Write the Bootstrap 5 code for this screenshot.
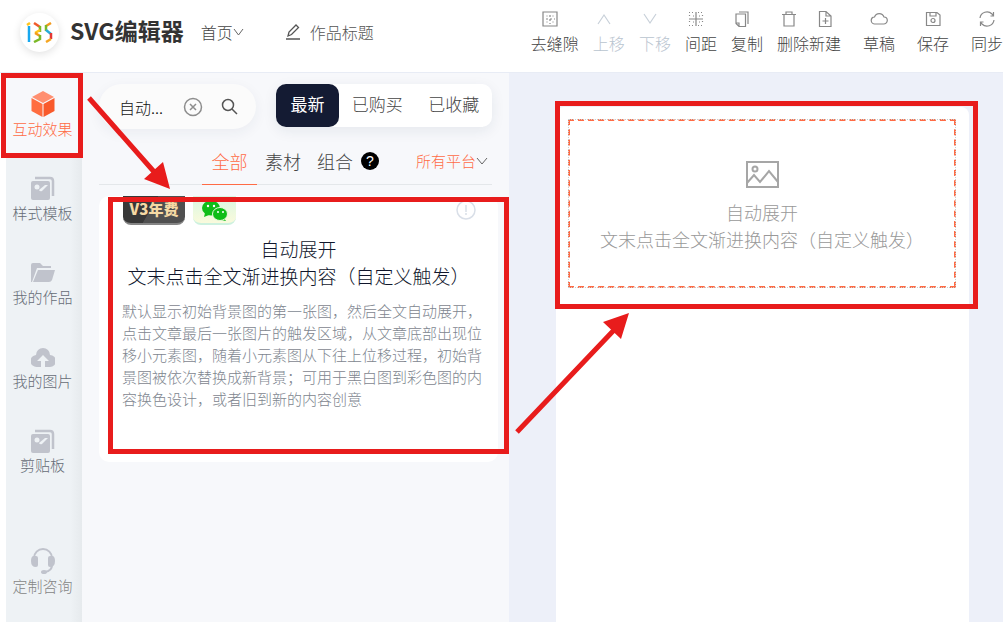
<!DOCTYPE html>
<html lang="zh-CN">
<head>
<meta charset="utf-8">
<meta name="viewport" content="width=device-width, initial-scale=1">
<title>SVG编辑器</title>
<link href="https://cdn.jsdelivr.net/npm/bootstrap@5.3.0/dist/css/bootstrap.min.css" rel="stylesheet">
<style>
:root{--coral:#ff6b45;--mark:#e81c1c;--navy:#141b33;--pane:#f7f8fb;--soft:#c0c3cc}
body{font-family:"Noto Sans CJK SC","Liberation Sans",sans-serif;font-weight:300;color:#444;background:#fff}
svg{display:block}
button{border:0;background:none;padding:0;color:inherit;font-weight:inherit;white-space:nowrap}
.app{min-height:100vh}
.topbar{height:72px;padding-left:20px;font-size:16px;box-shadow:0 1px 0 #e8ecf5;position:relative;z-index:1}
.logo-disc{width:39px;height:39px;margin-right:11px;border-radius:50%;box-shadow:0 2px 8px rgba(0,0,0,.12)}
.brand-name{font-size:23px;line-height:32px;font-weight:700;color:#333;margin-right:17px;padding-bottom:4px;white-space:nowrap}
.home-link{color:#444;margin-right:40px}
.work-name{width:80px;border:0;padding:0;font-weight:inherit;color:#555;background:none}
.work-name::placeholder{color:#555;opacity:1}
.tools{gap:22px;padding-top:10px;line-height:24px;align-self:flex-start}
.tools-main{gap:14px}
.tools svg{height:18px;width:18px;stroke:#888;fill:none;stroke-width:1.2;margin-bottom:3px}
.tools-main svg{margin-right:10px}
.tools .off{color:#b9c4cf}
.tools .off svg{stroke:#c8d0d9}
.side{width:76px;margin-left:6px;background:linear-gradient(90deg,#eef2f5 85%,#e6eaed);font-size:15px;line-height:22px}
.side a{height:84px;padding:18px 3px 0 0;color:#666d77;text-decoration:none}
.side a svg{margin-bottom:0}
.side .active{color:var(--coral);background:var(--pane)}
.side .help{margin-top:37px;color:#858585}
.mark-box{position:absolute;border:5px solid var(--mark);pointer-events:none}
.side .mark-box{inset:1px -1px -2px -5px;z-index:2}
.pane{width:427px;background:var(--pane);padding:12px 11px 0 17px}
.find{width:157px;height:45px;border-radius:23px;background:#fbfbfb;padding:0 17px 0 20px;box-shadow:0 4px 14px rgba(30,50,80,.06)}
.find input{width:48px;border:0;padding:0;font-size:16px;font-weight:300;background:none;color:#111;margin-right:16px}
.modes{height:43px;width:216px;background:#fff;border-radius:10px;font-size:17px;margin-right:6px;box-shadow:0 4px 14px rgba(30,50,80,.08)}
.modes button{flex:1 1 76px;padding-bottom:4px}
.modes .now{flex-basis:63px;flex-grow:0;background:var(--navy);color:#fff;font-weight:400;border-radius:10px}
.kinds{height:40px;margin:16px 6px 0 0;border-bottom:1px solid #e4e7ea;font-size:18px;padding-left:103px}
.kinds button{height:40px;line-height:32px;padding-bottom:8px}
.kinds .now{width:55px;color:var(--coral);border-bottom:1px solid var(--coral)}
.q{width:18px;height:18px;border-radius:50%;background:#000;color:#fff;font:400 14px/18px "Liberation Sans",sans-serif}
.plat{font-size:15px;color:var(--coral)}
.effect{margin-top:11px;background:#fff;border-radius:10px;height:266px;padding:0 22px 0 24px}
.tagline{height:29px;gap:8px}
.v3{width:62px;background:linear-gradient(120deg,#383838 45%,#505050 46%);border-bottom:2px solid #858585;border-radius:0 0 8px 8px;color:#f5d9a4;font-size:15px;line-height:26px;font-weight:900}
.wx{width:43px;background:linear-gradient(#d9f8e3,#fafadc);border-bottom:2px solid #cdf1df;border-radius:0 0 8px 8px}
.effect h2{font-size:19px;line-height:27px;font-weight:300;color:#10162c;margin:10px -10px 11px -12px}
.effect p{font-size:15px;line-height:22px;color:#7e868f;margin:0 -8px 0 -1px}
.effect .mark-box{inset:1px -11px 8px 9px}
.stage{background:#edf0f9;padding:35px 34px 0 47px;min-width:0}
.paper{background:#fff;border-radius:8px 8px 0 0;padding:12px 13px 0 12px}
.slot{height:169px;border:2px dashed var(--coral);outline:1px dotted #ccc;outline-offset:-1px;padding-top:38px;font-size:18px;line-height:27px;color:#999;white-space:nowrap}
.slot svg{margin-bottom:10px}
.paper .mark-box{top:-6px;left:-1px;right:-9px;height:208px}
.arrows{position:absolute;left:0;top:0;pointer-events:none}
</style>
</head>
<body>
<div class="app d-flex flex-column">
<header class="topbar d-flex align-items-center">
  <div class="d-flex align-items-center mb-2">
    <span class="logo-disc d-flex align-items-center justify-content-center"><svg width="27" height="21" viewBox="0 0 27 21" fill="none" stroke-width="2.500"><path stroke="#ffc51e" d="M1 3l3-2"/><path stroke="#18a8ef" d="M3 4v16"/><path stroke="#f15b2a" d="M8 1l6 4"/><path stroke="#7bb928" d="M14 4v6"/><path stroke="#ffc51e" d="M14 8l-5 3"/><path stroke="#f39a1e" d="M9 11l5 3"/><path stroke="#7bb928" d="M14 13v4l-6 3"/><path stroke="#f39a1e" d="M25 1l-5 3"/><path stroke="#7bb928" d="M20 3v6"/><path stroke="#24acd9" d="M20 8l5 4"/><path stroke="#e43834" d="M25 11v6"/><path stroke="#f5a623" d="M25 17l-5 3"/></svg></span>
    <span class="brand-name">SVG编辑器</span>
    <a href="#" class="home-link d-flex align-items-center text-decoration-none text-nowrap">首页<svg width="11" height="10" fill="none" stroke="#666"><path d="M1 2l4.500 6L10 2"/></svg></a>
    <svg class="me-2" width="18" height="16" fill="none" stroke="#555" stroke-width="1.300"><path d="M2 15h14M4 12l1-4 7-7 2.500 2.500-7 7z"/></svg>
    <input class="work-name" aria-label="作品标题" placeholder="作品标题">
  </div>
  <div class="tools d-flex ms-auto">
    <div class="d-flex">
    <div class="tools-main d-flex">
      <button class="d-flex flex-column align-items-center"><svg viewBox="0 0 18 18"><path d="M2 2h14v14H2z"/><path stroke-dasharray="2 2" d="M9 5v9M5 9h9"/><path d="M5.500 6h1M11.500 6h1M5.500 12h1M11.500 12h1"/></svg>去缝隙</button>
      <button class="off d-flex flex-column align-items-center"><svg viewBox="0 0 18 18"><path d="M3 14l6-9 6 9"/></svg>上移</button>
      <button class="off d-flex flex-column align-items-center"><svg viewBox="0 0 18 18"><path d="M3 4l6 9 6-9"/></svg>下移</button>
      <button class="d-flex flex-column align-items-center"><svg viewBox="0 0 18 18"><path d="M9 2v14M2 9h14"/><path stroke-dasharray="1 2" d="M2 2.500h5M11 2.500h5M2 15.500h5M11 15.500h5M2.500 5v2M15.500 5v2M2.500 11v3M15.500 11v3M6 6h1M12 6h1M6 12h1M12 12h1"/></svg>间距</button>
      <button class="d-flex flex-column align-items-center"><svg viewBox="0 0 18 18"><path d="M6 2h9v12M3 4h9.500v12.500H6L3 13.500zM3 13h3v3"/></svg>复制</button>
      <button class="d-flex flex-column align-items-center"><svg class="me-2" viewBox="0 0 18 18"><path d="M2 4.500h14M6 4V2h6v2M4 5v11h10V5"/></svg>删除</button>
    </div>
    <button class="d-flex flex-column align-items-center"><svg viewBox="0 0 18 18"><path d="M3.500 1.500H10L15 6v10.500H3.500zM10 2v4h4.500M9.500 8v6M6.500 11h6"/></svg>新建</button>
    </div>
    <button class="d-flex flex-column align-items-center"><svg viewBox="0 0 18 18"><path d="M5 14a3.500 3.500 0 0 1-.5-7 5 5 0 0 1 9.500 0 3.500 3.500 0 0 1-.5 7z"/></svg>草稿</button>
    <button class="d-flex flex-column align-items-center"><svg viewBox="0 0 18 18"><path d="M2.500 2.500H13L16 5v10.500H2.500zM6 3v3h6V3"/><circle cx="9" cy="10.500" r="2"/></svg>保存</button>
    <button class="d-flex flex-column align-items-center"><svg viewBox="0 0 18 18"><path d="M2 8a7 7 0 0 1 12-4l1.500 2M15.500 2v4h-3M16 10a7 7 0 0 1-12 4l-1.500-2M2.500 16v-4h3"/></svg>同步</button>
  </div>
</header>

<main class="d-flex flex-grow-1 position-relative">
  <nav class="side flex-shrink-0">
    <a href="#" class="active position-relative d-flex flex-column align-items-center"><svg width="24" height="28" viewBox="0 0 24 28"><path fill="#ff8f70" d="M12 1l11 6-11 6L1 7z"/><path fill="#ff6d40" d="M.5 8L11.500 14v13L.5 21z"/><path fill="#f95a2c" d="M23.500 8l-11 6v13l11-6z"/></svg>互动效果<span class="mark-box"></span></a>
    <a href="#" class="d-flex flex-column align-items-center"><svg width="24" height="28" viewBox="0 0 24 28"><path fill="none" stroke="#c0c3cc" stroke-width="2.500" d="M4 4h15q3 0 3 3v15"/><rect y="7" width="19" height="19" rx="2" fill="#c0c3cc"/><path fill="#eef2f5" d="M8 16l6-5h3l-6 6q-2 1-3-1z"/><circle cx="6" cy="13" r="2.500" fill="#eef2f5"/></svg>样式模板</a>
    <a href="#" class="d-flex flex-column align-items-center"><svg width="24" height="28" viewBox="0 0 24 28" fill="#c0c3cc"><path d="M0 24V7q0-2 2-2h7l3 3h8v2H6L1 24z"/><path d="M7 12h17l-3 10q-1 2-3 2H2z"/></svg>我的作品</a>
    <a href="#" class="d-flex flex-column align-items-center"><svg width="24" height="28" viewBox="0 0 24 28"><path fill="#c0c3cc" d="M6 25a6 6 0 0 1-1-12 7 7 0 0 1 14 0 6 6 0 0 1 0 12z"/><path fill="#eef2f5" d="M12 13l6 6h-4v6h-4v-6H6z"/></svg>我的图片</a>
    <a href="#" class="d-flex flex-column align-items-center"><svg width="24" height="28" viewBox="0 0 24 28"><path fill="none" stroke="#c0c3cc" stroke-width="2.500" d="M4 5h15q3 0 3 3v15"/><rect y="8" width="19" height="19" rx="2" fill="#c0c3cc"/><path fill="#eef2f5" d="M8 17l6-5h3l-6 6q-2 1-3-1z"/><circle cx="6" cy="14" r="2.500" fill="#eef2f5"/></svg>剪贴板</a>
    <a href="#" class="help d-flex flex-column align-items-center"><svg width="24" height="28" viewBox="0 0 24 28"><path fill="none" stroke="#c0c3cc" stroke-width="2" d="M3 12v-1a9 9 0 0 1 18 0v7q0 6-7 7"/><path fill="#c0c3cc" d="M2 9h3q2 0 2 2v7q0 2-2 2Q0 20 0 14q0-4 2-5M22 9h-3q-2 0-2 2v7q0 2 2 2 5 0 5-6 0-4-2-5"/><ellipse cx="13" cy="25" rx="3" ry="2" fill="#c0c3cc"/></svg>定制咨询</a>
  </nav>

  <section class="pane flex-shrink-0">
    <div class="d-flex justify-content-between">
      <form class="find d-flex align-items-center">
        <input aria-label="搜索" value="自动...">
        <button type="button" aria-label="清除"><svg width="20" height="20" fill="none" stroke="#8d8d8d" stroke-width="1.500"><circle cx="10" cy="10" r="8.500"/><path d="M7 7l6 6M13 7l-6 6"/></svg></button>
        <button type="button" class="ms-auto" aria-label="搜索"><svg width="18" height="18" fill="none" stroke="#555" stroke-width="1.500"><circle cx="7" cy="7" r="5.500"/><path d="M11 11l5 5"/></svg></button>
      </form>
      <div class="modes d-flex">
        <button class="now">最新</button><button>已购买</button><button>已收藏</button>
      </div>
    </div>
    <div class="kinds d-flex">
      <button class="now">全部</button>
      <button class="ms-2">素材</button>
      <button class="ms-3 d-flex align-items-center">组合<span class="q ms-2 text-center">?</span></button>
      <button class="plat ms-auto me-1 d-flex align-items-center">所有平台<svg width="12" height="10" fill="none" stroke="#666"><path d="M1 2l5 6 5-6"/></svg></button>
    </div>
    <article class="effect position-relative">
      <div class="tagline d-flex">
        <span class="v3 text-center">V3年费</span>
        <span class="wx d-flex justify-content-center"><svg width="26" height="27" viewBox="0 0 26 27"><ellipse cx="9" cy="12" rx="9" ry="7.500" fill="#0fbd18"/><path fill="#0fbd18" d="M3 17l-1 4 5-2zM22 22l2 3-5-1z"/><ellipse cx="18" cy="18" rx="7.500" ry="6.500" fill="#0fbd18" stroke="#e9f9dd"/><g fill="#fff"><circle cx="6" cy="10" r="1.200"/><circle cx="12" cy="10" r="1.200"/><circle cx="16" cy="16" r="1"/><circle cx="21" cy="16" r="1"/></g></svg></span>
        <svg class="ms-auto mt-1" width="20" height="20" viewBox="0 0 20 20" fill="none" stroke="#d9dfe8" stroke-width="1.500"><circle cx="10" cy="10" r="9"/><path d="M10 5v7M10 13v2"/></svg>
      </div>
      <h2 class="text-center">自动展开<br>文末点击全文渐进换内容（自定义触发）</h2>
      <p>默认显示初始背景图的第一张图，然后全文自动展开，点击文章最后一张图片的触发区域，从文章底部出现位移小元素图，随着小元素图从下往上位移过程，初始背景图被依次替换成新背景；可用于黑白图到彩色图的内容换色设计，或者旧到新的内容创意</p>
      <span class="mark-box"></span>
    </article>
  </section>

  <section class="stage flex-grow-1 d-flex">
    <div class="paper position-relative flex-grow-1">
      <div class="slot d-flex flex-column align-items-center">
        <svg width="33" height="30" viewBox="0 0 33 30" fill="none" stroke="#a6a6a6" stroke-width="2"><path d="M1 3h31v25H1zM1 24l7-8 6 7 9-11 9 11"/><circle cx="9" cy="10" r="2.500"/></svg>
        <span>自动展开</span><span>文末点击全文渐进换内容（自定义触发）</span>
      </div>
      <span class="mark-box"></span>
    </div>
  </section>

  <svg class="arrows" width="640" height="370" fill="#e81c1c" stroke="#e81c1c"><path stroke-width="5" d="M89 26l67 76M517 360l98-103"/><path stroke="none" d="M170 117l-26-10 19-17zM629 241l-26 9 18 17z"/></svg>
</main>
</div>
<script src="https://cdn.jsdelivr.net/npm/bootstrap@5.3.0/dist/js/bootstrap.bundle.min.js"></script>
</body>
</html>
